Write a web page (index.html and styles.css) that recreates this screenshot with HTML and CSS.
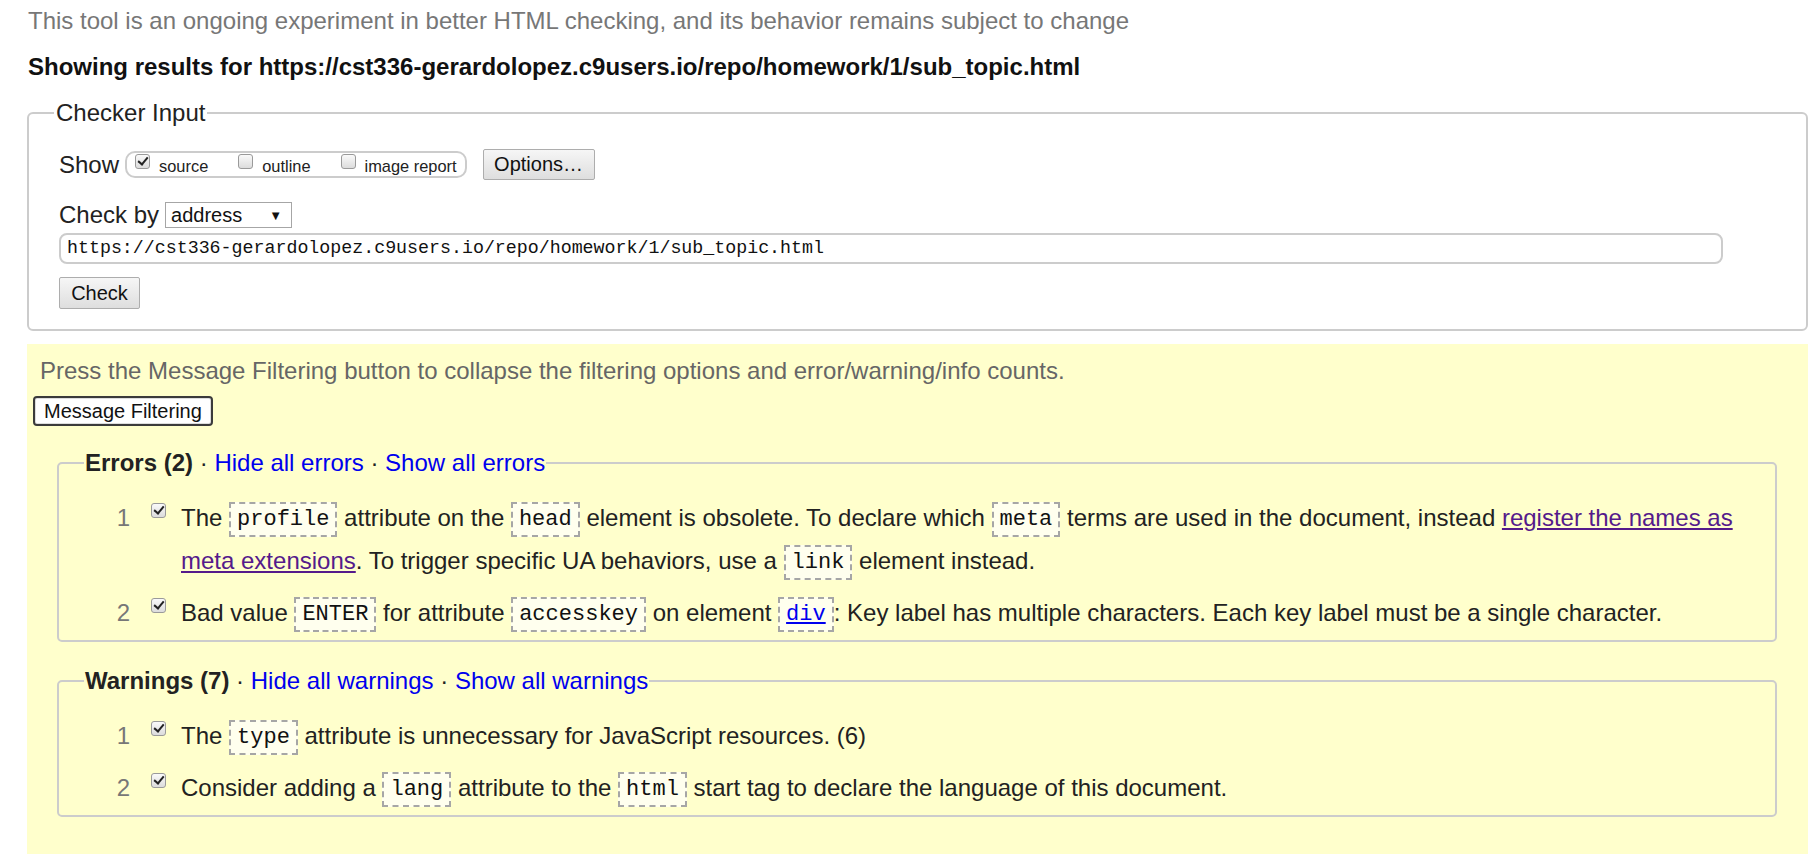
FILE: index.html
```html
<!DOCTYPE html>
<html lang="en">
<head>
<meta charset="utf-8">
<title>Nu Html Checker</title>
<link rel="stylesheet" href="styles.css">
</head>
<body>
<p class="intro">This tool is an ongoing experiment in better HTML checking, and its behavior remains subject to change</p>
<h2 class="showing">Showing results for https://cst336-gerardolopez.c9users.io/repo/homework/1/sub_topic.html</h2>

<fieldset class="checker">
  <legend>Checker Input</legend>
  <div class="show-row">
    <span class="lbl">Show</span>
    <fieldset class="show-opts">
      <span class="opt"><span class="cb checked"></span><span class="opt-text">source</span></span>
      <span class="opt"><span class="cb"></span><span class="opt-text">outline</span></span>
      <span class="opt"><span class="cb"></span><span class="opt-text">image report</span></span>
    </fieldset>
    <span class="btn opts-btn">Options…</span>
  </div>
  <div class="checkby-row">
    <span class="lbl">Check by</span>
    <span class="select"><span>address</span><span class="arrow">▼</span></span>
  </div>
  <div class="url">https://cst336-gerardolopez.c9users.io/repo/homework/1/sub_topic.html</div>
  <span class="btn check-btn">Check</span>
</fieldset>

<section class="results">
  <p class="press">Press the Message Filtering button to collapse the filtering options and error/warning/info counts.</p>
  <span class="filter-btn">Message Filtering</span>

  <fieldset class="msgs">
    <legend><b>Errors (2)</b> · <a class="lnk">Hide all errors</a> · <a class="lnk">Show all errors</a></legend>
    <ol class="list">
      <li><span class="num">1</span><span class="cb checked"></span><span class="msg">The <code>profile</code> attribute on the <code>head</code> element is obsolete. To declare which <code>meta</code> terms are used in the document, instead <a class="visited">register the names as meta extensions</a>. To trigger specific UA behaviors, use a <code>link</code> element instead.</span></li>
      <li><span class="num">2</span><span class="cb checked"></span><span class="msg">Bad value <code>ENTER</code> for attribute <code>accesskey</code> on element <code><a class="plain">div</a></code>: Key label has multiple characters. Each key label must be a single character.</span></li>
    </ol>
  </fieldset>

  <fieldset class="msgs">
    <legend><b>Warnings (7)</b> · <a class="lnk">Hide all warnings</a> · <a class="lnk">Show all warnings</a></legend>
    <ol class="list">
      <li><span class="num">1</span><span class="cb checked"></span><span class="msg">The <code>type</code> attribute is unnecessary for JavaScript resources. (6)</span></li>
      <li><span class="num">2</span><span class="cb checked"></span><span class="msg">Consider adding a <code>lang</code> attribute to the <code>html</code> start tag to declare the language of this document.</span></li>
    </ol>
  </fieldset>
</section>
</body>
</html>
```

FILE: styles.css
```css
html, body {
  margin: 0;
  padding: 0;
  background: #fff;
}
body {
  padding: 0 8px 0 27px;
  font-family: "Liberation Sans", Arial, sans-serif;
  font-size: 24px;
  color: #222;
  overflow: hidden;
}
.intro {
  margin: 8px 0 0 1px;
  line-height: 25px;
  color: #777;
}
.showing {
  margin: 21px 0 0 1px;
  font-size: 24px;
  line-height: 25px;
  font-weight: bold;
  color: #111;
}
fieldset {
  margin: 0;
  min-width: 0;
}
.checker {
  margin-top: 21px;
  border: 2px solid #ccc;
  border-radius: 6px;
  padding: 23px 20px 20px 30px;
}
.checker > legend {
  padding: 0 2px;
  margin-left: -5px;
  line-height: 26px;
  color: #222;
}
.show-row {
  display: flex;
  align-items: center;
  height: 31px;
}
.lbl {
  color: #222;
}
.show-opts {
  display: flex;
  align-items: flex-start;
  height: 27px;
  box-sizing: border-box;
  border: 2px solid #ccc;
  border-radius: 10px;
  padding: 1px 8px 0 8px;
  margin: 0 0 0 6px;
}
.opt {
  display: flex;
  align-items: flex-start;
  margin-right: 30px;
}
.opt:last-child { margin-right: 0; }
.opt-text {
  font-size: 16.4px;
  line-height: 20px;
  margin-top: 2px;
  margin-left: 9px;
  color: #222;
}
.cb {
  display: inline-block;
  flex: none;
  width: 15px;
  height: 15px;
  box-sizing: border-box;
  border: 1px solid #9a9a9a;
  border-radius: 3px;
  background: linear-gradient(#fafafa, #dcdcdc);
  margin-top: 0;
  position: relative;
}
.cb.checked::after {
  content: "";
  position: absolute;
  left: 4px;
  top: 0px;
  width: 4px;
  height: 8px;
  border: solid #222;
  border-width: 0 2px 2px 0;
  transform: rotate(40deg);
}
.btn {
  display: inline-flex;
  align-items: center;
  justify-content: center;
  box-sizing: border-box;
  border: 1px solid #adadad;
  border-radius: 2px;
  background: linear-gradient(#f6f6f6, #dedede);
  font-size: 20px;
  color: #111;
}
.opts-btn {
  width: 112px;
  height: 31px;
  margin-left: 16px;
}
.checkby-row {
  display: flex;
  align-items: center;
  height: 26px;
  margin-top: 22px;
}
.select {
  display: flex;
  align-items: center;
  justify-content: space-between;
  box-sizing: border-box;
  width: 127px;
  height: 26px;
  margin-left: 6px;
  border: 1px solid #a6a6a6;
  background: #fff;
  padding: 0 9px 0 5px;
  font-size: 20px;
  color: #111;
}
.arrow {
  font-size: 13px;
}
.url {
  box-sizing: border-box;
  width: 1664px;
  height: 31px;
  margin-top: 5px;
  border: 2px solid #ccc;
  border-radius: 8px;
  padding: 0 6px;
  font-family: "Liberation Mono", "DejaVu Sans Mono", monospace;
  font-size: 18.3px;
  line-height: 27px;
  color: #111;
  white-space: nowrap;
}
.check-btn {
  width: 81px;
  height: 32px;
  margin-top: 13px;
}
.results {
  margin-top: 13px;
  background: #ffffcc;
  padding: 14px 31px 60px 6px;
}
.press {
  margin: 0 0 0 7px;
  line-height: 25px;
  color: #666;
}
.filter-btn {
  display: inline-flex;
  align-items: center;
  box-sizing: border-box;
  height: 30px;
  margin-top: 13px;
  padding: 0 9px;
  border: 2px solid #3b3b3b;
  border-radius: 4px;
  background: #fff;
  font-size: 20px;
  color: #111;
  box-shadow: inset 0 0 0 1px #ddd;
}
.msgs {
  margin: 24px 0 0 24px;
  border: 2px solid #ccc;
  border-radius: 5px;
  padding: 20px 10px 6px 0;
}
.msgs + .msgs {
  margin-top: 26px;
}
.msgs > legend {
  margin-left: 25px;
  padding: 0 1px;
  line-height: 26px;
  color: #222;
}
.lnk {
  color: #0000ee;
  text-decoration: none;
}
.list {
  list-style: none;
  margin: 0;
  padding: 0;
}
.list li {
  display: flex;
  align-items: flex-start;
  line-height: 43px;
}
.list li + li {
  margin-top: 9px;
}
.num {
  flex: none;
  width: 71px;
  text-align: right;
  color: #777;
}
.list .cb {
  margin: 7px 0 0 21px;
}
.msg {
  margin-left: 15px;
  color: #222;
}
code {
  display: inline-block;
  font-family: "Liberation Mono", "DejaVu Sans Mono", monospace;
  font-size: 22px;
  line-height: 29px;
  padding: 1px 6px;
  border: 2px dashed #a6a6a6;
  background: #ffffee;
  vertical-align: middle;
  color: #111;
}
.visited {
  color: #551a8b;
  text-decoration: underline;
}
.plain {
  color: #0000ee;
  text-decoration: underline;
}
```
